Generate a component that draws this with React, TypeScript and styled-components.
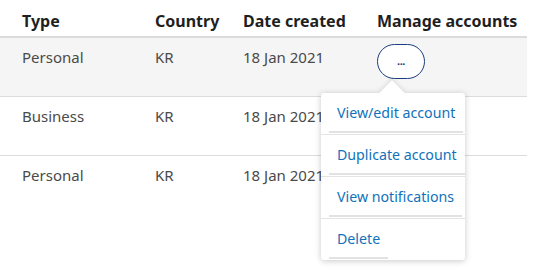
import * as React from 'react'
import styled, { createGlobalStyle } from 'styled-components'

const GlobalStyle = createGlobalStyle`
  body {
    margin: 0;
    background: #fff;
    font-family: "Noto Sans", "Open Sans", sans-serif;
    color: #2c2e2f;
  }
`

const Page = styled.div`
  min-height: 270px;
`

const Table = styled.div`
  width: 527px;
`

const Row = styled.div<{ $shaded?: boolean }>`
  display: grid;
  grid-template-columns: 155px 88px 134px 1fr;
  background: ${(p) => (p.$shaded ? '#f5f5f5' : '#fff')};
  border-bottom: 1px solid #dcdcdc;

  &:last-child {
    border-bottom-color: transparent;
  }
`

const HeadRow = styled(Row)`
  border-bottom: 2px solid #dcdcdc;
`

const HeadCell = styled.div`
  padding: 10px 0 4px;
  font-size: 16px;
  line-height: 22px;
  font-weight: 700;
  color: #1f1f1f;
  white-space: nowrap;

  &:first-child {
    padding-left: 22px;
  }
`

const Cell = styled.div<{ $action?: boolean }>`
  padding: ${(p) => (p.$action ? '6px 0 17px' : '8px 0 28px')};
  font-size: 15px;
  line-height: 22px;
  color: #4a4a4a;
  white-space: nowrap;

  &:first-child {
    padding-left: 22px;
  }
`

const ActionWrap = styled.div`
  position: relative;
  height: 35px;
`

const MoreButton = styled.button`
  width: 48px;
  height: 35px;
  border: 1.5px solid #1a3c7e;
  border-radius: 18px;
  background: #fff;
  color: #1a3c7e;
  font-family: inherit;
  font-size: 11px;
  font-weight: 700;
  letter-spacing: -0.5px;
  line-height: 1;
  padding: 0 0 2px;
  cursor: pointer;
`

const Menu = styled.ul`
  position: absolute;
  top: 49px;
  left: -56px;
  width: 144px;
  margin: 0;
  padding: 0;
  list-style: none;
  background: #fff;
  border-radius: 3px;
  box-shadow: 0 1px 6px rgba(0, 0, 0, 0.22);
  z-index: 2;

  &::before {
    content: '';
    position: absolute;
    top: -9px;
    left: 62px;
    width: 18px;
    height: 18px;
    background: #fff;
    transform: rotate(45deg);
    box-shadow: -2px -2px 4px rgba(0, 0, 0, 0.08);
  }
`

const MenuItem = styled.li`
  position: relative;
  padding: 0 0 1px;

  &:not(:last-child) {
    border-bottom: 1px solid #e4e4e4;
  }
`

const MenuLink = styled.a`
  display: inline-block;
  margin-left: 8px;
  padding: 9px 8px 7px;
  font-size: 14.2px;
  line-height: 22px;
  color: #1072bb;
  text-decoration: none;
  border-bottom: 2px solid #e2e2e2;
  white-space: nowrap;
`

const rows = [
  { type: 'Personal', country: 'KR', date: '18 Jan 2021' },
  { type: 'Business', country: 'KR', date: '18 Jan 2021' },
  { type: 'Personal', country: 'KR', date: '18 Jan 2021' },
]

const menuItems = ['View/edit account', 'Duplicate account', 'View notifications', 'Delete']

export default function App() {
  return (
    <Page>
      <GlobalStyle />
      <Table>
        <HeadRow>
          <HeadCell>Type</HeadCell>
          <HeadCell>Country</HeadCell>
          <HeadCell>Date created</HeadCell>
          <HeadCell>Manage accounts</HeadCell>
        </HeadRow>
        {rows.map((r, i) => (
          <Row key={i} $shaded={i === 0}>
            <Cell>{r.type}</Cell>
            <Cell>{r.country}</Cell>
            <Cell>{r.date}</Cell>
            <Cell $action>
              {i === 0 && (
                <ActionWrap>
                  <MoreButton aria-label="More actions">...</MoreButton>
                  <Menu>
                    {menuItems.map((m) => (
                      <MenuItem key={m}>
                        <MenuLink href="#">{m}</MenuLink>
                      </MenuItem>
                    ))}
                  </Menu>
                </ActionWrap>
              )}
            </Cell>
          </Row>
        ))}
      </Table>
    </Page>
  )
}
